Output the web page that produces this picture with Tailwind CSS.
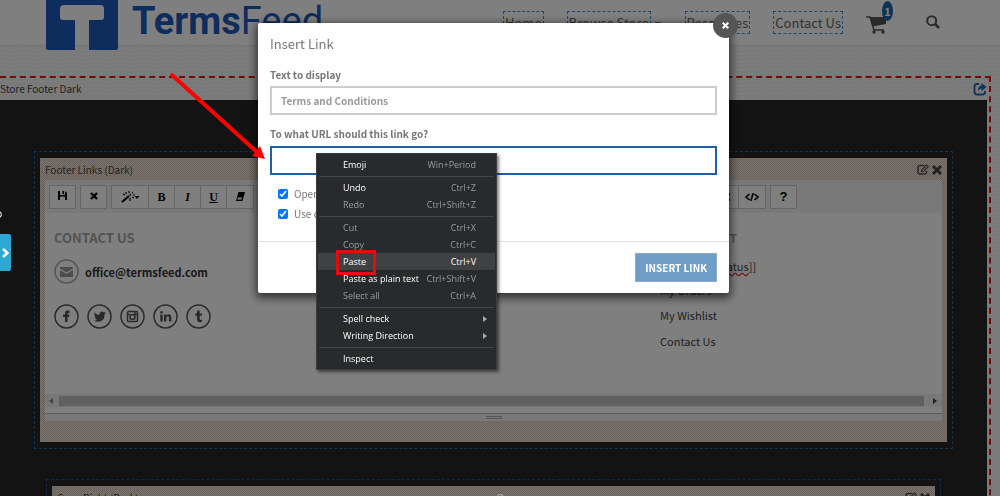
<!DOCTYPE html>
<html lang="en">
<head>
<meta charset="utf-8">
<title>TermsFeed store editor</title>
<script src="https://cdn.jsdelivr.net/npm/@tailwindcss/browser@4"></script>
</head>
<body class="relative h-screen overflow-hidden bg-[#f8f8f8] font-['Noto_Sans_CJK_JP',sans-serif] text-[#444]">

<!-- Store page -->
<div class="h-screen overflow-hidden bg-[repeating-linear-gradient(90deg,#00000005_0_1px,transparent_1px_3px),repeating-linear-gradient(0deg,#00000006_0_1px,transparent_1px_4px)]">
  <header class="flex h-[46px] items-start border-b border-[#e4e4e4] bg-white pr-[60px] pl-[46px]">
    <a href="#" class="flex shrink-0 items-start" aria-label="TermsFeed">
      <svg class="h-[50px] w-[72px]" viewBox="0 0 72 50"><path d="M0 0H72V48Q72 50 70 50H43V20H55Q58 20 58 17V9Q58 5 54 5H18Q14 5 14 9V17Q14 20 17 20H29V50H2Q0 50 0 48Z" fill="#1d59b8"/></svg>
      <span class="ml-[14px] font-[Roboto,sans-serif] text-[38px] leading-[43px] text-[#1d59b8]"><b class="font-bold">Terms</b>Feed</span>
    </a>
    <nav class="ml-auto flex shrink-0 items-center pt-[10px] text-[13px] leading-[21px] text-[#666]">
      <a href="#" class="border border-dashed border-[#4490d8] px-px">Home</a>
      <a href="#" class="ml-[23px] border border-dashed border-[#4490d8] px-px">Browse Store</a>
      <span class="ml-1 h-px w-[6px] bg-[#777]"></span>
      <a href="#" class="ml-[24px] border border-dashed border-[#4490d8] px-px">Resources</a>
      <a href="#" class="ml-[23px] border border-dashed border-[#4490d8] px-px">Contact Us</a>
      <a href="#" class="relative ml-[23px] block" aria-label="Cart">
        <svg class="mt-[6px] h-[18px] w-[21px]" viewBox="0 0 21 18"><path d="M0 1H4L8 14H18" fill="none" stroke="#555" stroke-width="1.5"/><path d="M4 1H20V8L6.500 10.500Z" fill="#555"/><circle cx="8" cy="16" r="1.700" fill="#555"/><circle cx="17" cy="16" r="1.700" fill="#555"/></svg>
        <span class="absolute -top-[9px] left-[16px] h-[20px] w-[11px] rounded-[50%] bg-[#1b66b0] text-center text-[11px] leading-[20px] font-bold text-white">1</span>
      </a>
      <a href="#" class="ml-[39px]" aria-label="Search"><svg class="h-[14px] w-[14px]" viewBox="0 0 14 14" fill="none" stroke="#555"><circle cx="5.700" cy="5.700" r="4.500" stroke-width="2"/><path d="M9 9L13 13" stroke-width="2.500"/></svg></a>
    </nav>
  </header>

  <main class="mt-[30px] mr-[9px] border-t-2 border-r-2 border-dashed border-[#e01818]">
    <div class="mr-[2px]">
      <div class="flex h-[22px] items-center justify-between text-[10px] leading-[16px]">
        <span>Store Footer Dark</span>
        <button type="button" aria-label="Share"><svg class="h-[14px] w-[14px]" viewBox="0 0 14 14" fill="none" stroke="#1d66b4"><path d="M6 2H4Q1.500 2 1.500 4.500V10Q1.500 12.500 4 12.500H9.500Q12 12.500 12 10V9" stroke-width="1.800"/><path d="M8.500 1L13.500 5L8.500 9V6.500Q6 6.500 5 9Q4.500 4 8.500 3.500Z" fill="#1d66b4" stroke="none"/></svg></button>
      </div>
      <div class="h-screen bg-[#262626] pt-[51px] pr-[34px] pl-[34px]">
        <section class="border border-dashed border-[#2a6498] px-[5px] py-[6px]">
          <div class="bg-[repeating-conic-gradient(#fce8dc_0_25%,#cfc2ba_0_50%)] bg-[length:2px_2px] px-[5px] pb-[21px]">
            <div class="flex h-[22px] items-center justify-between pt-px text-[10px] leading-[16px]">
              <span>Footer Links (Dark)</span>
              <div class="flex items-center gap-[3px]">
                <button type="button" aria-label="Edit"><svg class="h-[11px] w-[12px]" viewBox="0 0 12 11" fill="none" stroke="#555"><path d="M7.500 1.500H3Q1 1.500 1 3.500V8Q1 10 3 10H7.500Q9.500 10 9.500 8V7" stroke-width="1.500"/><path d="M4.500 7.500L5 5.500L9.500 1L11.500 2.500L7 7Z" stroke-width="1.200"/></svg></button>
                <button type="button" aria-label="Remove"><svg class="h-[10px] w-[10px]" viewBox="0 0 10 10" stroke="#444" stroke-width="3"><path d="M1 1L9 9M9 1L1 9"/></svg></button>
              </div>
            </div>
            <div class="bg-white">
              <div class="flex h-[33px] items-center justify-between bg-[#f3f3f3] pr-[145px] pl-[4px] text-black">
                <div class="flex items-center gap-1">
                  <button type="button" class="grid h-[24px] w-[27px] place-items-center border border-[#ccc] bg-white pb-[2px]" aria-label="Save"><svg class="h-[9px] w-[9px]" viewBox="0 0 9 9"><path d="M0 0H2V4H7V0L9 2V9H7V5.500H2V9H0Z"/><path d="M4.500 0H6V3H4.500Z"/></svg></button>
                  <button type="button" class="grid h-[24px] w-[27px] place-items-center border border-[#ccc] bg-white pb-[2px]" aria-label="Cancel"><svg class="h-[8px] w-[8px]" viewBox="0 0 8 8" stroke="#000" stroke-width="2.400"><path d="M1 1L7 7M7 1L1 7"/></svg></button>
                  <div class="flex divide-x divide-[#ccc] border border-[#ccc] bg-white font-['Liberation_Serif',serif] text-[12px] leading-[22px] font-bold">
                    <button type="button" class="grid w-[37px] place-items-center" aria-label="Style"><svg class="h-[12px] w-[19px]" viewBox="0 0 19 12"><path d="M1 11L8 5" stroke="#000" stroke-width="2.200"/><path d="M8.500 4.500L10 3M5 1V3M2 3L4 4M8 0V2M12 1L11 2M11 6L13 7M9 7V10M12 4H14" stroke="#000" stroke-width="1.200"/><path d="M13.500 5H18.500L16 8Z"/></svg></button>
                    <button type="button" class="w-[26px]">B</button>
                    <button type="button" class="w-[26px] italic">I</button>
                    <button type="button" class="w-[26px] underline">U</button>
                    <button type="button" class="grid w-[26px] place-items-center" aria-label="Clear formatting"><svg class="h-[9px] w-[9px]" viewBox="0 0 9 9"><path d="M2.500 0H9L6.500 9H0Z"/><path d="M1.800 5.500H6L5.500 7.500H1.200Z" fill="#fff"/></svg></button>
                  </div>
                  <button type="button" class="h-[24px] w-[27px] border border-[#ccc] bg-white" aria-label="Text colour"></button>
                </div>
                <div class="flex items-center gap-1">
                  <div class="flex divide-x divide-[#ccc] border border-[#ccc] bg-white">
                    <button type="button" class="grid h-[22px] w-[26px] place-items-center" aria-label="Full screen"><svg class="h-[8px] w-[8px]" viewBox="0 0 8 8" stroke="#000" stroke-width="1.300"><path d="M1 1L7 7M7 1L1 7"/><path d="M0 0H3L0 3ZM8 0V3L5 0ZM0 8V5L3 8ZM8 8H5L8 5Z" stroke="none"/></svg></button>
                    <button type="button" class="grid h-[22px] w-[26px] place-items-center" aria-label="Code view"><svg class="h-[8px] w-[14px]" viewBox="0 0 14 8" fill="none" stroke="#000" stroke-width="1.600"><path d="M4.500 1L1 4L4.500 7M9.500 1L13 4L9.500 7M8.200 0L5.800 8"/></svg></button>
                  </div>
                  <button type="button" class="h-[24px] w-[27px] border border-[#ccc] bg-white font-['Liberation_Sans',sans-serif] text-[13px] leading-[22px] font-bold">?</button>
                </div>
              </div>
              <div class="flex h-[181px] justify-between pl-[9px]">
                <div>
                  <h3 class="mt-[14px] text-[13px] leading-[22px] font-bold text-[#a6a6a6]">CONTACT US</h3>
                  <p class="mt-[10px] flex items-center gap-[6px] text-[11px] leading-[18px] font-bold text-[#333]">
                    <svg class="h-[25px] w-[25px]" viewBox="0 0 25 25"><circle cx="12.500" cy="12.500" r="11.500" fill="none" stroke="#aaa" stroke-width="1.500"/><path d="M6 8H19V9.500L12.500 13.500L6 9.500ZM6 11L12.500 15L19 11V18H6Z" fill="#999"/></svg>
                    office@termsfeed.com
                  </p>
                  <div class="mt-[20px] flex gap-2 text-[#555]">
                    <a href="#" aria-label="Facebook"><svg class="h-[25px] w-[25px]" viewBox="0 0 25 25"><circle cx="12.500" cy="12.500" r="11.500" fill="none" stroke="currentColor" stroke-width="1.500"/><path d="M11 18V13H9V10.500H11V9Q11 6.500 13.500 6.500H15.500V9H14.500Q13.500 9 13.500 10V10.500H15.500L15 13H13.500V18Z" fill="currentColor"/></svg></a>
                    <a href="#" aria-label="Twitter"><svg class="h-[25px] w-[25px]" viewBox="0 0 25 25"><circle cx="12.500" cy="12.500" r="11.500" fill="none" stroke="currentColor" stroke-width="1.500"/><path d="M7.500 8.500Q9.500 10.800 12.500 11Q12 8 14.800 7.500Q16 7.500 16.800 8.300L18.300 7.800L17.500 9.200L19 9L17.500 10.500Q17.500 17.500 11 17.800Q8.500 17.800 7 16.700Q9 16.700 10.200 15.700Q8.500 15.500 8 14L9 13.900Q7.300 13 7.200 11.500L8.300 11.800Q6.800 10.500 7.500 8.500Z" fill="currentColor"/></svg></a>
                    <a href="#" aria-label="Instagram"><svg class="h-[25px] w-[25px]" viewBox="0 0 25 25" fill="none" stroke="currentColor" stroke-width="1.500"><circle cx="12.500" cy="12.500" r="11.500"/><rect x="7.500" y="7.500" width="10" height="10" rx="1"/><circle cx="12.500" cy="13" r="2.500"/><path d="M8 10.500H10.500M14.500 10.500H17M15 8V10"/></svg></a>
                    <a href="#" aria-label="LinkedIn"><svg class="h-[25px] w-[25px]" viewBox="0 0 25 25"><circle cx="12.500" cy="12.500" r="11.500" fill="none" stroke="currentColor" stroke-width="1.500"/><circle cx="8.500" cy="8.200" r="1.300" fill="currentColor"/><path d="M7.300 10.500H9.700V17.500H7.300ZM11 10.500H13.300V11.500Q14 10.300 15.700 10.300Q18.300 10.300 18.300 13.300V17.500H15.900V13.700Q15.900 12.300 14.800 12.300Q13.400 12.300 13.400 14V17.500H11Z" fill="currentColor"/></svg></a>
                    <a href="#" aria-label="Tumblr"><svg class="h-[25px] w-[25px]" viewBox="0 0 25 25"><circle cx="12.500" cy="12.500" r="11.500" fill="none" stroke="currentColor" stroke-width="1.500"/><path d="M11.500 6.500H13.700V9.500H16V11.800H13.700V14.700Q13.700 16 14.800 16Q15.500 16 16 15.600V17.600Q15 18.200 13.800 18.200Q11 18.200 11 15.200V11.800H9.300V10Q11.300 9.300 11.500 6.500Z" fill="currentColor"/></svg></a>
                  </div>
                </div>
                <div class="w-[282px] text-[11px] leading-[18px] text-[#444]">
                  <h3 class="mt-[14px] text-[12px] leading-[22px] font-bold text-[#a6a6a6]">MY ACCOUNT</h3>
                  <p class="mt-2">[[<span class="underline decoration-red-600 decoration-wavy">My Order Status</span>]]</p>
                  <p class="mt-[6px]"><a href="#">My Orders</a></p>
                  <p class="mt-[7px]"><a href="#">My Wishlist</a></p>
                  <p class="mt-2"><a href="#">Contact Us</a></p>
                </div>
              </div>
              <div class="flex h-[13px] items-center justify-between bg-[#f0f0f0] px-1">
                <svg class="h-[6px] w-[4px]" viewBox="0 0 4 6"><path d="M4 0V6L0 3Z" fill="#888"/></svg>
                <div class="mx-[6px] h-[10px] grow bg-[#c1c1c1]"></div>
                <svg class="mr-[1px] ml-[3px] h-[6px] w-[4px]" viewBox="0 0 4 6"><path d="M0 0V6L4 3Z" fill="#444"/></svg>
              </div>
              <div class="mt-[6px] flex h-[8px] justify-center border-t border-[#bbb] bg-[#f3f3f3] pt-[2px]"><div class="h-[3px] w-[16px] border-y border-[#aaa]"></div></div>
            </div>
          </div>
        </section>
        <section class="mx-3 mt-[30px] border border-dashed border-[#24508c] px-[5px] py-[6px]">
          <div class="bg-[repeating-conic-gradient(#fce8dc_0_25%,#cfc2ba_0_50%)] bg-[length:2px_2px] px-[5px]">
            <div class="flex h-[22px] items-center justify-between pt-px text-[10px] leading-[16px]">
              <span>Copy Right (Dark)</span>
              <div class="flex items-center gap-[3px]">
                <button type="button" aria-label="Edit"><svg class="h-[11px] w-[12px]" viewBox="0 0 12 11" fill="none" stroke="#555"><path d="M7.500 1.500H3Q1 1.500 1 3.500V8Q1 10 3 10H7.500Q9.500 10 9.500 8V7" stroke-width="1.500"/><path d="M4.500 7.500L5 5.500L9.500 1L11.500 2.500L7 7Z" stroke-width="1.200"/></svg></button>
                <button type="button" aria-label="Remove"><svg class="h-[10px] w-[10px]" viewBox="0 0 10 10" stroke="#444" stroke-width="3"><path d="M1 1L9 9M9 1L1 9"/></svg></button>
              </div>
            </div>
          </div>
        </section>
      </div>
    </div>
  </main>
</div>

<!-- Backdrop and dialog -->
<div class="fixed inset-0 flex items-start justify-center bg-black/50 pt-[23px] pr-[13px]">
  <div role="dialog" aria-label="Insert Link" class="relative w-[471px] rounded-[2px] bg-white text-[#777] shadow-[0_3px_9px_2px_rgba(0,0,0,0.6)]">
    <button type="button" aria-label="Close" class="absolute -top-[10px] -right-[9px] grid h-[25px] w-[25px] place-items-center rounded-full bg-[#555]"><svg class="h-[7px] w-[7px]" viewBox="0 0 7 7" stroke="#fff" stroke-width="2"><path d="M.7 .7L6.300 6.300M6.300 .7L.7 6.300"/></svg></button>
    <div class="h-[218px] px-3 pt-[11px] text-[10px] leading-[16px]">
      <h2 class="text-[13px] leading-[20px]">Insert Link</h2>
      <label for="txt" class="mt-[13px] block font-bold">Text to display</label>
      <input id="txt" type="text" value="Terms and Conditions" class="mt-[3px] block h-[29px] w-full border-2 border-[#ccc] px-[9px] font-bold text-[#999] outline-none">
      <label for="url" class="mt-[11px] block font-bold">To what URL should this link go?</label>
      <input id="url" type="text" class="mt-[4px] block h-[29px] w-full border-2 border-[#1f5fa5] px-[9px] outline-none">
      <div class="mt-[11px] ml-2 flex flex-col gap-1">
        <label class="flex items-center gap-[6px]"><input type="checkbox" checked class="h-[10px] w-[10px] accent-[#0075ff]">Open in new window</label>
        <label class="flex items-center gap-[6px]"><input type="checkbox" checked class="h-[10px] w-[10px] accent-[#0075ff]">Use default protocol</label>
      </div>
    </div>
    <div class="flex h-[52px] items-center justify-end border-t border-[#e0dfe3] px-3">
      <button type="button" class="h-[29px] border border-[#8fa9bf] bg-[#6f9fc8] px-[9px] text-[10px] leading-[16px] font-bold text-white">INSERT LINK</button>
    </div>
  </div>
</div>

<!-- Side tab -->
<span class="absolute top-[209px] -left-[4px] text-[9px] leading-[12px] text-white">D</span>
<button type="button" aria-label="Open panel" class="absolute top-[234px] left-0 grid h-[37px] w-[11px] place-items-center rounded-r-[2px] bg-[#2ba9d3]"><svg class="h-[10px] w-[7px]" viewBox="0 0 7 10" fill="none" stroke="#fff" stroke-width="2.500"><path d="M1 1L5.500 5L1 9"/></svg></button>
<span class="absolute -bottom-[5px] left-[497px] h-[7px] w-[7px] rounded-full border border-[#bbb]"></span>

<!-- Context menu -->
<ul role="menu" class="absolute top-[153px] left-[316px] w-[181px] border border-[#3c3d3e] bg-[#292a2b] px-px pt-[2px] pb-[2px] font-['Open_Sans',sans-serif] text-[9px] leading-[17px] text-[#9a9b9c] shadow-[2px_2px_3px_rgba(0,0,0,0.5)]">
  <li class="flex justify-between pr-[19px] pl-[25px]"><span class="text-white">Emoji</span><span>Win+Period</span></li>
  <li class="mx-px mt-[3px] mb-[2px] h-px bg-[#444546]"></li>
  <li class="flex justify-between pr-[19px] pl-[25px]"><span class="text-white">Undo</span><span>Ctrl+Z</span></li>
  <li class="flex justify-between pr-[19px] pl-[25px]"><span>Redo</span><span>Ctrl+Shift+Z</span></li>
  <li class="mx-px mt-[3px] mb-[2px] h-px bg-[#444546]"></li>
  <li class="flex justify-between pr-[19px] pl-[25px]"><span>Cut</span><span>Ctrl+X</span></li>
  <li class="flex justify-between pr-[19px] pl-[25px]"><span>Copy</span><span>Ctrl+C</span></li>
  <li class="relative flex justify-between bg-[#404142] pr-[19px] pl-[25px] text-white"><span>Paste</span><span>Ctrl+V</span><span class="absolute -top-[3px] left-[18px] h-[25px] w-[40px] border-3 border-[#e60b0b]"></span></li>
  <li class="flex justify-between pr-[19px] pl-[25px]"><span class="text-white">Paste as plain text</span><span>Ctrl+Shift+V</span></li>
  <li class="flex justify-between pr-[19px] pl-[25px]"><span>Select all</span><span>Ctrl+A</span></li>
  <li class="mx-px mt-[3px] mb-[2px] h-px bg-[#444546]"></li>
  <li class="flex items-center justify-between pr-[8px] pl-[25px] text-white"><span>Spell check</span><svg class="h-[6px] w-[4px]" viewBox="0 0 4 6"><path d="M0 0V6L4 3Z" fill="#aaa"/></svg></li>
  <li class="flex items-center justify-between pr-[8px] pl-[25px] text-white"><span>Writing Direction</span><svg class="h-[6px] w-[4px]" viewBox="0 0 4 6"><path d="M0 0V6L4 3Z" fill="#aaa"/></svg></li>
  <li class="mx-px mt-[3px] mb-[2px] h-px bg-[#444546]"></li>
  <li class="pl-[25px] text-white">Inspect</li>
</ul>

<!-- Pointer arrow -->
<svg class="absolute top-[70px] left-[166px] h-[92px] w-[102px]" viewBox="0 0 102 92"><path d="M6 5L92 83" stroke="#f00" stroke-width="4" stroke-linecap="round"/><path d="M99 89L86 86L94 76Z" fill="#f00"/></svg>
</body>
</html>
